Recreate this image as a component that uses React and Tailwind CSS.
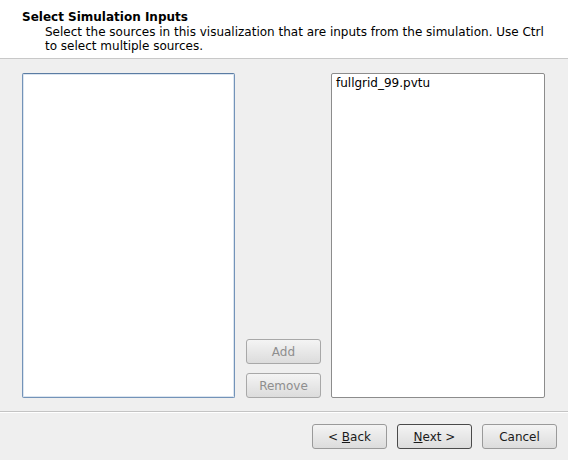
import React from 'react'

const font = { fontFamily: '"DejaVu Sans", "Liberation Sans", sans-serif' }

const Btn = ({ children, disabled, focused, className = '' }) => (
  <button
    className={`h-[25px] w-[75px] rounded-[3px] border text-[12px] bg-gradient-to-b from-[#f4f4f4] to-[#dcdcdc] ${
      disabled ? 'border-[#a8a8a8] text-[#8e8e8e]' : focused ? 'border-[#4a4a4a] text-[#1a1a1a]' : 'border-[#9a9a9a] text-[#1a1a1a]'
    } ${className}`}
  >
    {children}
  </button>
)

export default function App() {
  return (
    <div className="w-[568px] h-[460px] bg-[#efefef] flex flex-col" style={font}>
      {/* header */}
      <div className="h-[59px] bg-white border-b border-[#c8c8c8] pl-[22px] pt-[9px] shrink-0">
        <div className="text-[12px] font-bold text-black leading-[16px]">Select Simulation Inputs</div>
        <div className="pl-[23px] pr-[20px] text-[12px] text-black leading-[14px]">
          Select the sources in this visualization that are inputs from the simulation. Use Ctrl to select multiple sources.
        </div>
      </div>

      {/* body */}
      <div className="flex pl-[22px] pr-[23px] pt-[14px] h-[352px] shrink-0">
        <div className="w-[214px] h-[325px] bg-white border border-[#7393b8] border-t-[#5a7ca3] rounded-[2px] shadow-[inset_0_0_0_1px_#dbe5f0]" />
        <div className="w-[75px] h-[325px] ml-[11px] flex flex-col justify-end gap-[9px]">
          <Btn disabled>Add</Btn>
          <Btn disabled>Remove</Btn>
        </div>
        <div className="w-[215px] ml-[10px] h-[325px] bg-white border border-[#8c8c8c] rounded-[2px] px-[4px] pt-[1px]">
          <div className="text-[12px] text-black leading-[16px]">fullgrid_99.pvtu</div>
        </div>
      </div>

      {/* footer */}
      <div className="border-t border-[#c4c4c4] shadow-[inset_0_1px_0_#ffffff] flex justify-end gap-[10px] pr-[11px] pt-[12px]">
        <Btn>
          &lt; <span className="underline">B</span>ack
        </Btn>
        <Btn focused>
          <span className="underline">N</span>ext &gt;
        </Btn>
        <Btn>Cancel</Btn>
      </div>
    </div>
  )
}
